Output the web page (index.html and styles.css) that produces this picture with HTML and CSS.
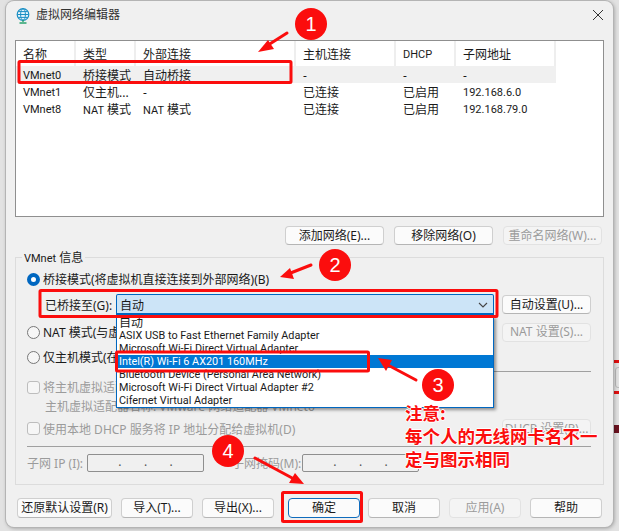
FILE: index.html
```html
<!DOCTYPE html>
<html lang="zh-CN">
<head>
<meta charset="utf-8">
<title>虚拟网络编辑器</title>
<link rel="stylesheet" href="styles.css">
</head>
<body>
<div class="backdrop-bits">
  <span class="bit bit-red bit-a"></span>
  <span class="bit bit-red bit-b"></span>
  <span class="bit bit-btn"></span>
  <span class="bit bit-dark"></span>
</div>
<main class="window">
  <header class="titlebar">
    <svg class="app-icon" viewBox="0 0 14 16" width="14" height="16">
      <circle cx="7" cy="6.500" r="5.800" fill="#e4f4fb" stroke="#1b8fc4" stroke-width="1.200"/>
      <ellipse cx="7" cy="6.500" rx="2.400" ry="5.800" fill="none" stroke="#1b8fc4" stroke-width="1"/>
      <path d="M1.500 6.500h11M2.400 3.600h9.200M2.400 9.400h9.200" stroke="#1b8fc4" stroke-width="1" fill="none"/>
      <path d="M7 12v2M3.500 15h7" stroke="#2aa36f" stroke-width="1.400" fill="none"/>
    </svg>
    <span class="title">虚拟网络编辑器</span>
    <svg class="close" viewBox="0 0 10 10" width="10" height="10"><path d="M0 0l10 10M10 0L0 10" stroke="#333" stroke-width="1" fill="none"/></svg>
  </header>

  <section class="list">
    <div class="row head">
      <span>名称</span><span>类型</span><span>外部连接</span><span>主机连接</span><span class="lat">DHCP</span><span>子网地址</span>
    </div>
    <div class="row selected">
      <span class="lat">VMnet0</span><span>桥接模式</span><span>自动桥接</span><span>-</span><span>-</span><span>-</span>
    </div>
    <div class="row">
      <span class="lat">VMnet1</span><span>仅主机...</span><span>-</span><span>已连接</span><span>已启用</span><span class="lat">192.168.6.0</span>
    </div>
    <div class="row">
      <span class="lat">VMnet8</span><span><b class="lat">NAT</b> 模式</span><span><b class="lat">NAT</b> 模式</span><span>已连接</span><span>已启用</span><span class="lat">192.168.79.0</span>
    </div>
  </section>

  <div class="list-actions">
    <button class="btn w99">添加网络(E)...</button>
    <button class="btn w99">移除网络(O)</button>
    <button class="btn w99 off">重命名网络(W)...</button>
  </div>

  <section class="group">
    <span class="legend"><b class="lat">VMnet</b> 信息</span>

    <div class="line l-bridge">
      <span class="radio on"></span><span>桥接模式(将虚拟机直接连接到外部网络)(B)</span>
    </div>

    <div class="line l-combo">
      <span class="combo-label">已桥接至(G):</span>
      <div class="combo">
        <span>自动</span>
        <svg class="chev" viewBox="0 0 10 6" width="10" height="6"><path d="M1 1l4 4 4-4" stroke="#444" stroke-width="1.100" fill="none"/></svg>
        <ul class="menu">
          <li>自动</li>
          <li class="lat">ASIX USB to Fast Ethernet Family Adapter</li>
          <li class="lat">Microsoft Wi-Fi Direct Virtual Adapter</li>
          <li class="lat hot">Intel(R) Wi-Fi 6 AX201 160MHz</li>
          <li class="lat">Bluetooth Device (Personal Area Network)</li>
          <li class="lat">Microsoft Wi-Fi Direct Virtual Adapter #2</li>
          <li class="lat">Cifernet Virtual Adapter</li>
        </ul>
      </div>
      <button class="btn side">自动设置(U)...</button>
    </div>

    <div class="line l-nat">
      <span class="radio"></span><span>NAT 模式(与虚拟机共享主机的 IP 地址)(N)</span>
      <button class="btn side off">NAT 设置(S)...</button>
    </div>

    <div class="line l-host">
      <span class="radio"></span><span>仅主机模式(在专用网络内连接虚拟机)(H)</span>
    </div>

    <hr class="rule short">

    <div class="line l-check off-text">
      <span class="check"></span><span>将主机虚拟适配器连接到此网络(V)</span>
    </div>

    <div class="line l-sub off-text">主机虚拟适配器名称: VMware 网络适配器 VMnet0</div>

    <div class="line l-dhcp off-text">
      <span class="check"></span><span>使用本地 DHCP 服务将 IP 地址分配给虚拟机(D)</span>
      <button class="btn side off">DHCP 设置(P)...</button>
    </div>

    <hr class="rule">

    <div class="line l-ip off-text">
      <span class="ip-label">子网 IP (I):</span>
      <div class="ip"><i>.</i><i>.</i><i>.</i></div>
      <span class="mask-label">子网掩码(M):</span>
      <div class="ip"><i>.</i><i>.</i><i>.</i></div>
    </div>
  </section>

  <footer class="actions">
    <button class="btn w95">还原默认设置(R)</button>
    <button class="btn w72 gap-a">导入(T)...</button>
    <button class="btn w72 gap-a">导出(X)...</button>
    <button class="btn w72 gap-b primary">确定</button>
    <button class="btn w72 gap-c">取消</button>
    <button class="btn w72 gap-a off">应用(A)</button>
    <button class="btn w72 gap-a">帮助</button>
  </footer>
</main>

<svg class="marks" viewBox="0 0 619 531" width="619" height="531">
  <g fill="none" stroke="#fb0d0d" stroke-width="3">
    <rect x="19" y="61.500" width="272" height="21" rx="1"/>
    <rect x="40" y="290.500" width="457" height="26" rx="1"/>
    <rect x="116.500" y="352" width="252" height="19" rx="1"/>
    <rect x="282.500" y="492.500" width="79" height="29" rx="1"/>
  </g>
  <g stroke="#fb0d0d" stroke-width="3" fill="#fb0d0d" stroke-linecap="round">
    <path d="M287 33L265 47"/><path d="M258 52l16-3-6-9z" stroke="none"/>
    <path d="M311 265L288 274"/><path d="M280 277l14 2-4-11z" stroke="none"/>
    <path d="M416 380L386 364"/><path d="M378 358l8 13 6-11z" stroke="none"/>
    <path d="M255 458L294 479"/><path d="M304 484l-15-1 6-10z" stroke="none"/>
  </g>
  <g class="badge">
    <circle cx="311" cy="24" r="16"/><text x="311" y="31">1</text>
    <circle cx="335" cy="265" r="16"/><text x="335" y="272">2</text>
    <circle cx="438" cy="385" r="16"/><text x="438" y="392">3</text>
    <circle cx="228" cy="451" r="16"/><text x="228" y="458">4</text>
  </g>
</svg>

<p class="note">注意:<br>每个人的无线网卡名不一<br>定与图示相同</p>
</body>
</html>
```
FILE: styles.css
```css
* { box-sizing: border-box; }
html, body { margin: 0; padding: 0; }
body {
  width: 619px;
  height: 531px;
  overflow: hidden;
  position: relative;
  background: #e2e2e2;
  font-family: "Noto Sans", "Noto Sans CJK SC", sans-serif;
  font-size: 12px;
  color: #1a1a1a;
  padding: 1px 0 0 6px;
}
.lat { font-family: Roboto, "Noto Sans CJK SC", sans-serif; font-size: 11px; font-weight: 400; }
.window {
  width: 607px;
  height: 526px;
  background: #f0f0f0;
  border-radius: 8px;
  box-shadow: 0 0 0 1px #b4b4b4, 1px 1px 4px rgba(0,0,0,.35);
  position: relative;
  padding: 0 9px;
}
.titlebar {
  height: 39px;
  display: flex;
  align-items: flex-start;
  margin: 0 -9px;
  padding: 6px 10px 0 10px;
}
.app-icon { margin: 1px 0 0 0; }
.title { font-size: 12px; line-height: 16px; color: #333; margin-left: 6px; flex: 1; }
.close { margin: 3px 0 0; }

.list {
  height: 177px;
  background: #fff;
  border: 1px solid #8f8f8f;
}
.row {
  display: grid;
  grid-template-columns: 60px 60px 160px 100px 60px 100px;
  height: 17px;
  line-height: 19px;
  width: 540px;
}
.row span { padding-left: 7px; white-space: nowrap; overflow: hidden; }
.head { height: 25px; line-height: 27px; }
.head span { border-right: 2px solid #eeeeee; }
.selected { background: #f0f0f0; }

.list-actions {
  display: flex;
  justify-content: flex-end;
  gap: 10px;
  margin: 9px 2px 0 0;
  height: 19px;
}
.btn {
  font: inherit;
  color: #1a1a1a;
  background: #fbfbfb;
  border: 1px solid #cfcfcf;
  border-bottom-color: #b5b5b5;
  border-radius: 4px;
  padding: 0;
  height: 19px;
  line-height: 16px;
  white-space: nowrap;
}
.btn.off { color: #9b9b9b; background: #f4f4f4; border-color: #e2e2e2; }
.w99 { width: 99px; }
.w95 { width: 95px; height: 20px; }
.w72 { width: 72px; height: 20px; }
.gap-a { margin-left: 9px; }
.gap-b { margin-left: 14px; }
.gap-c { margin-left: 8px; }
.primary { border: 1px solid #0f6cbd; }

.group {
  position: relative;
  height: 228px;
  margin-top: 12px;
  border: 1px solid #dcdcdc;
  padding: 12px 12px 0 11px;
  display: flex;
  flex-direction: column;
}
.legend {
  position: absolute;
  left: 6px;
  top: -8px;
  background: #f0f0f0;
  padding: 0 2px;
  line-height: 16px;
}
.line { display: flex; align-items: center; white-space: nowrap; flex: none; }
.line .side { margin-left: auto; }
.l-bridge { height: 18px; }
.l-combo { height: 21px; margin-top: 6px; }
.l-nat { height: 20px; margin-top: 7px; }
.l-host { height: 18px; margin-top: 6px; }
.l-check { height: 18px; margin-top: 6px; }
.l-sub { height: 18px; margin-top: 1px; padding-left: 18px; }
.l-dhcp { height: 19px; margin-top: 4px; }
.l-ip { height: 18px; margin-top: 7px; }
.off-text { color: #9b9b9b; }

.radio {
  width: 13px;
  height: 13px;
  border-radius: 50%;
  border: 1px solid #777;
  background: #f6f6f6;
  margin-right: 3px;
  flex: none;
}
.radio.on { border: 4px solid #0067c0; background: #fff; }
.check {
  width: 13px;
  height: 13px;
  border: 1px solid #bdbdbd;
  border-radius: 3px;
  background: #f6f6f6;
  margin-right: 3px;
  flex: none;
}
.combo-label { margin-left: 18px; width: 71px; color: #1a1a1a; }
.combo {
  position: relative;
  width: 378px;
  height: 21px;
  background: #cce4f7;
  border: 1px solid #0067c0;
  border-bottom-width: 2px;
  border-radius: 2px 2px 0 0;
  display: flex;
  align-items: center;
  justify-content: space-between;
  padding: 1px 5px 0 3px;
}
.menu {
  list-style: none;
  margin: 0;
  padding: 0;
  position: absolute;
  left: -1px;
  right: -1px;
  top: 21px;
  height: 92px;
  background: #fff;
  border: 1px solid #0067c0;
  border-top: 0;
  box-shadow: 2px 2px 3px rgba(0,0,0,.4);
  z-index: 2;
}
.menu li {
  height: 13px;
  line-height: 13px;
  padding-left: 2px;
  color: #1a1a1a;
  white-space: nowrap;
}
.menu li.lat { font-size: 10.850px; }
.menu li.hot { background: #0078d4; color: #fff; }
.side { width: 89px; flex: none; }

.rule { border: 0; height: 1px; background: #a0a0a0; margin: 5px 0 0; flex: none; }
.rule.short { margin-left: 260px; }
.l-dhcp + .rule { margin-top: 8px; }

.ip-label { width: 60px; }
.mask-label { width: 70px; margin-left: 28px; }
.ip {
  width: 117px;
  height: 18px;
  border: 1px solid #8f8f8f;
  border-radius: 2px;
  display: flex;
  justify-content: space-around;
  padding: 0 19px;
  background: #f0f0f0;
  line-height: 14px;
  color: #555;
}
.ip i { font-style: normal; }

.actions {
  display: flex;
  margin-top: 13px;
  padding-left: 2px;
}

.marks { position: absolute; left: 0; top: 0; z-index: 5; pointer-events: none; }
.badge circle { fill: #fb0d0d; }
.badge text {
  fill: #fff;
  font-family: "Liberation Sans", sans-serif;
  font-size: 20px;
  text-anchor: middle;
}
.note {
  position: absolute;
  z-index: 6;
  left: 405px;
  top: 401px;
  margin: 0;
  color: #fb0d0d;
  font-family: "Noto Sans CJK SC", sans-serif;
  font-size: 17.500px;
  font-weight: 700;
  line-height: 23px;
  white-space: nowrap;
  text-shadow: 1px 0 0 #fff, -1px 0 0 #fff, 0 1px 0 #fff, 0 -1px 0 #fff;
}

.bit { position: absolute; display: block; }
.bit-red { left: 614px; width: 5px; height: 3px; background: #e01010; }
.bit-a { top: 360px; }
.bit-b { top: 391px; }
.bit-btn { left: 615px; top: 367px; width: 8px; height: 21px; border: 1px solid #bbb; border-radius: 3px; }
.bit-dark { left: 614px; top: 425px; width: 5px; height: 8px; background: #6b1320; }
```
